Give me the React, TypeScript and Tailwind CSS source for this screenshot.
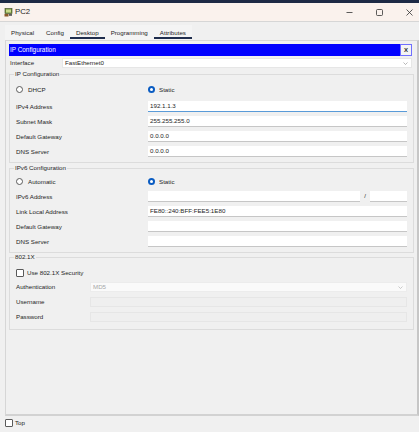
import React from 'react'

const base = "font-['Liberation_Sans',Arial,sans-serif] text-[#1e1e1e]"

function Radio({ checked }: { checked?: boolean }) {
  if (checked) {
    return (
      <span className="flex h-[7px] w-[7px] items-center justify-center rounded-full bg-[#0a5cc2]">
        <span className="h-[3px] w-[3px] rounded-full bg-white" />
      </span>
    )
  }
  return <span className="h-[7px] w-[7px] rounded-full border border-[#5a5a5a] bg-white" />
}

function Check() {
  return <span className="h-[8px] w-[8px] rounded-[1px] border border-[#5a5a5a] bg-white" />
}

function Input({ value, focused, className = '' }: { value?: string; focused?: boolean; className?: string }) {
  return (
    <div
      className={`flex h-[11px] items-center bg-white pl-[2px] text-[6.2px] ${
        focused ? 'border-b-[1.5px] border-[#5a9bd8]' : 'border-b border-[#c6c6c6]'
      } ${className}`}
    >
      {value}
    </div>
  )
}

function Row({ label, children, gap = 'mt-[4px]' }: { label: string; children: React.ReactNode; gap?: string }) {
  return (
    <div className={`flex h-[11px] items-center ${gap}`}>
      <span className="w-[132px] shrink-0 text-[6.2px]">{label}</span>
      <div className="flex flex-1 items-center">{children}</div>
    </div>
  )
}

function Group({ title, children, className = '' }: { title: string; children: React.ReactNode; className?: string }) {
  return (
    <fieldset className={`border border-[#dcdcdc] pl-[6px] pr-[6px] ${className}`}>
      <legend className="ml-[-2px] px-[1px] text-[6.2px] leading-[8px]">{title}</legend>
      {children}
    </fieldset>
  )
}

function PcIcon() {
  return (
    <svg width="9" height="9" viewBox="0 0 9 9">
      <rect x="1" y="0.5" width="7" height="5" fill="#6f8f3a" stroke="#3e4a22" strokeWidth="0.6" />
      <rect x="2" y="1.5" width="5" height="3" fill="#c9d98a" />
      <rect x="0.5" y="6" width="4" height="2.5" fill="#8a5a2b" />
      <rect x="5" y="6.2" width="3" height="1.5" fill="#3c3c3c" />
    </svg>
  )
}

export default function App() {
  return (
    <div className={`flex h-[432px] w-[419px] flex-col overflow-hidden bg-[#f0f0f0] ${base}`}>
      <div className="h-[3px] bg-[#1d2a45]" />

      {/* title bar */}
      <div className="flex h-[19px] items-center border-b border-[#d6d6d6] bg-[#faf2ed]">
        <div className="ml-[4px] flex items-center">
          <PcIcon />
        </div>
        <span className="ml-[2px] text-[7.8px]">PC2</span>
        <div className="ml-auto flex items-center gap-[23px] pr-[6px] text-[#333]">
          <svg width="7" height="7" viewBox="0 0 7 7">
            <line x1="0.5" y1="3.5" x2="6.5" y2="3.5" stroke="#333" strokeWidth="0.8" />
          </svg>
          <svg width="7" height="7" viewBox="0 0 7 7">
            <rect x="0.5" y="0.5" width="6" height="6" rx="1" fill="none" stroke="#333" strokeWidth="0.8" />
          </svg>
          <svg width="7" height="7" viewBox="0 0 7 7">
            <path d="M0.5 0.5L6.5 6.5M6.5 0.5L0.5 6.5" stroke="#333" strokeWidth="0.8" />
          </svg>
        </div>
      </div>

      {/* tabs */}
      <div className="flex h-[18px] items-end pl-[5px]">
        <div className="flex items-end bg-[#f4f4f4] pb-[1px] pt-[3px] text-[6.2px]">
          <span className="flex h-[11px] items-center border-b-2 border-transparent px-[6px]">Physical</span>
          <span className="flex h-[11px] items-center border-b-2 border-transparent px-[6px]">Config</span>
          <span className="flex h-[11px] items-center border-b-2 border-[#1f2d4d] px-[6px]">Desktop</span>
          <span className="flex h-[11px] items-center border-b-2 border-transparent px-[6px]">Programming</span>
          <span className="flex h-[11px] items-center border-b-2 border-[#1f2d4d] px-[6px]">Attributes</span>
        </div>
      </div>

      {/* panel */}
      <div className="ml-[5px] flex h-[376px] w-[414px] flex-col border-b-2 border-l border-r-2 border-t border-b-[#d2d2d2] border-l-[#d6d6d6] border-r-[#c6c6c6] border-t-[#d6d6d6] pl-[3px] pr-[3px] pt-[3px]">
        <div className="mr-[2px] flex h-[12px]">
          <div className="flex flex-1 items-center bg-[#0000ff] pl-[1px] text-[6.4px] text-white">IP Configuration</div>
          <div className="flex w-[12px] items-center justify-center border border-[#6f6fff] bg-[#f4f4f4] text-[6px] font-bold">
            X
          </div>
        </div>

        <div className="mr-[2px] mt-[2px] flex h-[10px] items-center">
          <span className="w-[53px] shrink-0 pl-[1px] text-[6.2px]">Interface</span>
          <div className="flex h-full flex-1 items-center border border-[#e6e6e6] bg-white pl-[2px] text-[6.2px]">
            FastEthernet0
            <svg className="ml-auto mr-[3px]" width="5" height="3" viewBox="0 0 5 3">
              <path d="M0.5 0.5L2.5 2.5L4.5 0.5" fill="none" stroke="#888" strokeWidth="0.6" />
            </svg>
          </div>
        </div>

        <Group title="IP Configuration" className="mt-[2px] pb-[5px]">
          <div className="mt-[7px] flex h-[10px] items-center">
            <div className="flex w-[132px] items-center gap-[5px] text-[6.2px]">
              <Radio />
              DHCP
            </div>
            <div className="flex items-center gap-[4px] text-[6.2px]">
              <Radio checked />
              Static
            </div>
          </div>
          <Row label="IPv4 Address" gap="mt-[6px]">
            <Input value="192.1.1.3" focused className="flex-1" />
          </Row>
          <Row label="Subnet Mask">
            <Input value="255.255.255.0" className="flex-1" />
          </Row>
          <Row label="Default Gateway">
            <Input value="0.0.0.0" className="flex-1" />
          </Row>
          <Row label="DNS Server">
            <Input value="0.0.0.0" className="flex-1" />
          </Row>
        </Group>

        <Group title="IPv6 Configuration" className="mt-[1px] pb-[5px]">
          <div className="mt-[5px] flex h-[10px] items-center">
            <div className="flex w-[132px] items-center gap-[5px] text-[6.2px]">
              <Radio />
              Automatic
            </div>
            <div className="flex items-center gap-[4px] text-[6.2px]">
              <Radio checked />
              Static
            </div>
          </div>
          <Row label="IPv6 Address">
            <Input className="flex-1" />
            <span className="w-[10px] text-center text-[6px]">/</span>
            <Input className="w-[37px]" />
          </Row>
          <Row label="Link Local Address">
            <Input value="FE80::240:BFF:FEE5:1E80" className="flex-1" />
          </Row>
          <Row label="Default Gateway">
            <Input className="flex-1" />
          </Row>
          <Row label="DNS Server">
            <Input className="flex-1" />
          </Row>
        </Group>

        <Group title="802.1X" className="pb-[7px]">
          <div className="mt-[7px] flex h-[9px] items-center gap-[3px] text-[6.2px]">
            <Check />
            Use 802.1X Security
          </div>
          <div className="mt-[5px] flex h-[10px] items-center">
            <span className="w-[74px] shrink-0 text-[6.2px]">Authentication</span>
            <div className="flex h-full flex-1 items-center border border-[#ececec] bg-[#fafafa] pl-[2px] text-[6.2px] text-[#a8a8a8]">
              MD5
              <svg className="ml-auto mr-[3px]" width="5" height="3" viewBox="0 0 5 3">
                <path d="M0.5 0.5L2.5 2.5L4.5 0.5" fill="none" stroke="#aaa" strokeWidth="0.6" />
              </svg>
            </div>
          </div>
          <div className="mt-[5px] flex h-[10px] items-center">
            <span className="w-[74px] shrink-0 text-[6.2px]">Username</span>
            <div className="h-full flex-1 border border-[#e6e6e6] bg-[#efefef]" />
          </div>
          <div className="mt-[5px] flex h-[10px] items-center">
            <span className="w-[74px] shrink-0 text-[6.2px]">Password</span>
            <div className="h-full flex-1 border border-[#e6e6e6] bg-[#efefef]" />
          </div>
        </Group>
      </div>

      <div className="ml-[5px] mt-[3px] flex h-[8px] items-center gap-[2px] text-[6.2px]">
        <Check />
        Top
      </div>
    </div>
  )
}
